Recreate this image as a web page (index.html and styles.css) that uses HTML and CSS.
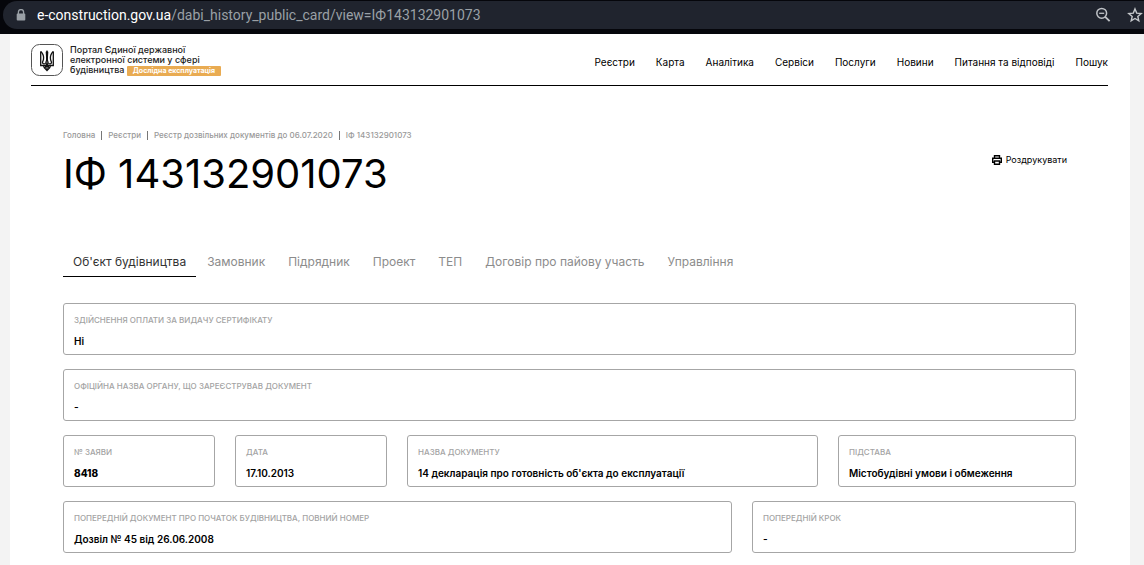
FILE: index.html
```html
<!DOCTYPE html>
<html lang="uk">
<head>
  <meta charset="UTF-8">
  <meta name="viewport" content="width=device-width, initial-scale=1.0">
  <title>ІФ 143132901073</title>
  <link rel="stylesheet" href="styles.css">
</head>
<body>
  <div class="browser-bar">
    <div class="address">
      <svg class="lock" width="10" height="12" viewBox="0 0 10 12" aria-hidden="true">
        <path d="M2.4 5V3.2a2.6 2.6 0 0 1 5.2 0V5" fill="none" stroke="#9aa0a6" stroke-width="1.3"/>
        <rect x="0.7" y="4.4" width="8.6" height="7.2" rx="1" fill="#9aa0a6"/>
      </svg>
      <div class="url"><span class="domain">e-construction.gov.ua</span>/dabi_history_public_card/view=ІФ143132901073</div>
      <button type="button" class="bar-button" aria-label="Масштаб">
        <svg width="16" height="16" viewBox="0 0 16 16" fill="none" stroke="#bfc2c6">
          <circle cx="6.7" cy="6.3" r="4.9" stroke-width="1.5"/>
          <path d="M4.2 6.3h5" stroke-width="1.3"/>
          <path d="M10.2 9.8l4.4 4.4" stroke-width="1.8"/>
        </svg>
      </button>
      <button type="button" class="bar-button" aria-label="Закладка">
        <svg width="16" height="16" viewBox="0 0 16 16" fill="none" stroke="#c4c7ca" stroke-width="1.4">
          <path d="M8 1.9l1.7 4.2 4.5.4-3.4 2.9 1 4.4L8 11.5l-3.8 2.3 1-4.4-3.4-2.9 4.5-.4z"/>
        </svg>
      </button>
    </div>
  </div>

  <div class="page">
    <header>
      <a href="#" class="logo">
        <svg width="32" height="32" viewBox="0 0 32 32" aria-hidden="true">
          <rect x="0.5" y="0.5" width="31" height="31" rx="8" fill="#fff" stroke="#555"/>
          <g fill="none" stroke="#111" stroke-width="1.3">
            <path d="M9.7 7.5v14h12.6v-14"/>
            <path d="M9.7 7.5c2.5 2.3 3.2 5 2.8 7.7-.2 1.5-.9 2-1 3.2 0 1.5 2.3 2 3.2.6 1-1.8 1.3-4 1.3-6.5 0 2.5.3 4.7 1.3 6.5.9 1.4 3.2.9 3.2-.6-.1-1.2-.8-1.7-1-3.2-.4-2.7.3-5.4 2.8-7.7"/>
            <path d="M12.5 21.5c.2 2.5 1.8 3.2 3.5 5 1.7-1.8 3.3-2.5 3.5-5M16 18.5v8M14 24l2-5 2 5"/>
          </g>
          <path d="M16 6l1.3 2-.5 8h-1.6l-.5-8z" fill="#111"/>
        </svg>
        <span class="logo-text">Портал Єдиної державної<br>електронної системи у сфері<br>будівництва <span class="badge">Дослідна експлуатація</span></span>
      </a>
      <nav class="menu">
        <a href="#">Реєстри</a>
        <a href="#">Карта</a>
        <a href="#">Аналітика</a>
        <a href="#">Сервіси</a>
        <a href="#">Послуги</a>
        <a href="#">Новини</a>
        <a href="#">Питання та відповіді</a>
        <a href="#">Пошук</a>
      </nav>
    </header>

    <main>
      <nav class="breadcrumbs">
        <a href="#">Головна</a>
        <a href="#">Реєстри</a>
        <a href="#">Реєстр дозвільних документів до 06.07.2020</a>
        <span>ІФ 143132901073</span>
      </nav>
      <div class="title-row">
        <h1>ІФ 143132901073</h1>
        <button type="button" class="print">
          <svg width="10" height="10" viewBox="0 0 10 10" fill="none" stroke="#000" stroke-width="1.4" aria-hidden="true">
            <path d="M2.5 3V.7h5V3M2.5 7.3H.7V3.2h8.6v4.1H7.5"/>
            <path d="M2.5 6h5v3.3h-5z"/>
          </svg>
          Роздрукувати
        </button>
      </div>

      <div class="tabs">
        <button type="button" class="tab active">Об'єкт будівництва</button>
        <button type="button" class="tab">Замовник</button>
        <button type="button" class="tab">Підрядник</button>
        <button type="button" class="tab">Проект</button>
        <button type="button" class="tab">ТЕП</button>
        <button type="button" class="tab">Договір про пайову участь</button>
        <button type="button" class="tab">Управління</button>
      </div>

      <div class="card">
        <dl class="row">
          <div class="field">
            <dt>Здійснення оплати за видачу сертифікату</dt>
            <dd>Ні</dd>
          </div>
        </dl>
        <dl class="row">
          <div class="field">
            <dt>Офіційна назва органу, що зареєстрував документ</dt>
            <dd>-</dd>
          </div>
        </dl>
        <dl class="row row-document">
          <div class="field">
            <dt>№ заяви</dt>
            <dd><b>8418</b></dd>
          </div>
          <div class="field">
            <dt>Дата</dt>
            <dd>17.10.2013</dd>
          </div>
          <div class="field">
            <dt>Назва документу</dt>
            <dd>14 декларація про готовність об'єкта до експлуатації</dd>
          </div>
          <div class="field">
            <dt>Підстава</dt>
            <dd>Містобудівні умови і обмеження</dd>
          </div>
        </dl>
        <dl class="row row-previous">
          <div class="field">
            <dt>Попередній документ про початок будівництва, повний номер</dt>
            <dd>Дозвіл № 45 від 26.06.2008</dd>
          </div>
          <div class="field">
            <dt>Попередній крок</dt>
            <dd>-</dd>
          </div>
        </dl>
      </div>
    </main>
  </div>
</body>
</html>
```
FILE: styles.css
```css
* {
  box-sizing: border-box;
}
body {
  display: flex;
  flex-direction: column;
  min-height: 100vh;
  margin: 0;
  font-family: Inter, Arial, sans-serif;
  font-size: 10px;
  color: #000;
  background-color: #f3f3f3;
}
a {
  color: inherit;
  text-decoration: none;
}
button {
  padding: 0;
  border: none;
  background: none;
  font-family: inherit;
  cursor: pointer;
}
.browser-bar {
  padding: 1px 0 5px 3px;
  background-color: #05060b;
}
.address {
  display: flex;
  align-items: center;
  height: 28px;
  padding: 0 1px 0 13px;
  border-radius: 14px 0 0 14px;
  background-color: #20242e;
}
.url {
  flex: 1;
  margin-left: 11px;
  font-family: Roboto, sans-serif;
  font-size: 14px;
  line-height: 20px;
  color: #9aa0a6;
}
.domain {
  color: #fff;
}
.bar-button {
  display: flex;
  margin-left: 16px;
}
.page {
  flex: 1;
  margin: 0 14px 0 10px;
  padding: 0 22px 0 21px;
  background-color: #fff;
}
header {
  display: flex;
  align-items: center;
  justify-content: space-between;
  height: 52px;
  border-bottom: 1px solid #000;
}
.logo {
  display: flex;
  align-items: center;
  gap: 7px;
}
.logo-text {
  padding-top: 1px;
  font-size: 9px;
  line-height: 10px;
  font-weight: 500;
  color: #222;
}
.badge {
  display: inline-block;
  padding: 0 6px;
  border-radius: 1px;
  font-size: 7px;
  font-weight: 700;
  color: #fff;
  background-color: #e9ab52;
}
.menu {
  display: flex;
  gap: 21px;
  padding-top: 4px;
}
main {
  padding: 42px 32px 12px;
}
.breadcrumbs {
  display: flex;
  font-size: 8px;
  line-height: 14px;
  font-weight: 500;
  color: #999;
}
.breadcrumbs > * {
  display: flex;
  align-items: center;
}
.breadcrumbs > * + *::before {
  content: "";
  width: 1px;
  height: 9px;
  margin: 0 6px;
  background-color: #777;
}
.title-row {
  display: flex;
  align-items: flex-start;
  justify-content: space-between;
}
h1 {
  margin: 8px 0 0;
  font-size: 40px;
  line-height: 48px;
  font-weight: 400;
}
.print {
  display: flex;
  align-items: center;
  gap: 4px;
  margin: 11px 9px 0 0;
  font-size: 9px;
  line-height: 14px;
  color: #000;
}
.tabs {
  display: flex;
  gap: 23px;
  margin-top: 50px;
}
.tab {
  height: 29px;
  padding-bottom: 1px;
  border-bottom: 1px solid transparent;
  font-size: 12px;
  color: #8c8c8c;
}
.tab.active {
  padding: 0 10px 1px;
  margin-right: -12px;
  border-bottom-color: #000;
  color: #333;
}
.card {
  display: grid;
  gap: 14px;
  margin-top: 26px;
}
.row {
  display: grid;
  gap: 20px;
  margin: 0;
}
.row-document {
  grid-template-columns: 152fr 152fr 411fr 238fr;
}
.row-previous {
  grid-template-columns: 669fr 324fr;
}
.field {
  padding: 10px 10px 6px;
  border: 1px solid #a6a6a6;
  border-radius: 3px;
}
.field dt {
  font-size: 8px;
  line-height: 12px;
  font-weight: 500;
  text-transform: uppercase;
  color: #a3a3a3;
}
.field dd {
  margin: 8px 0 0;
  font-size: 10px;
  line-height: 14px;
  font-weight: 600;
}
.field b {
  font-weight: 800;
}
```
